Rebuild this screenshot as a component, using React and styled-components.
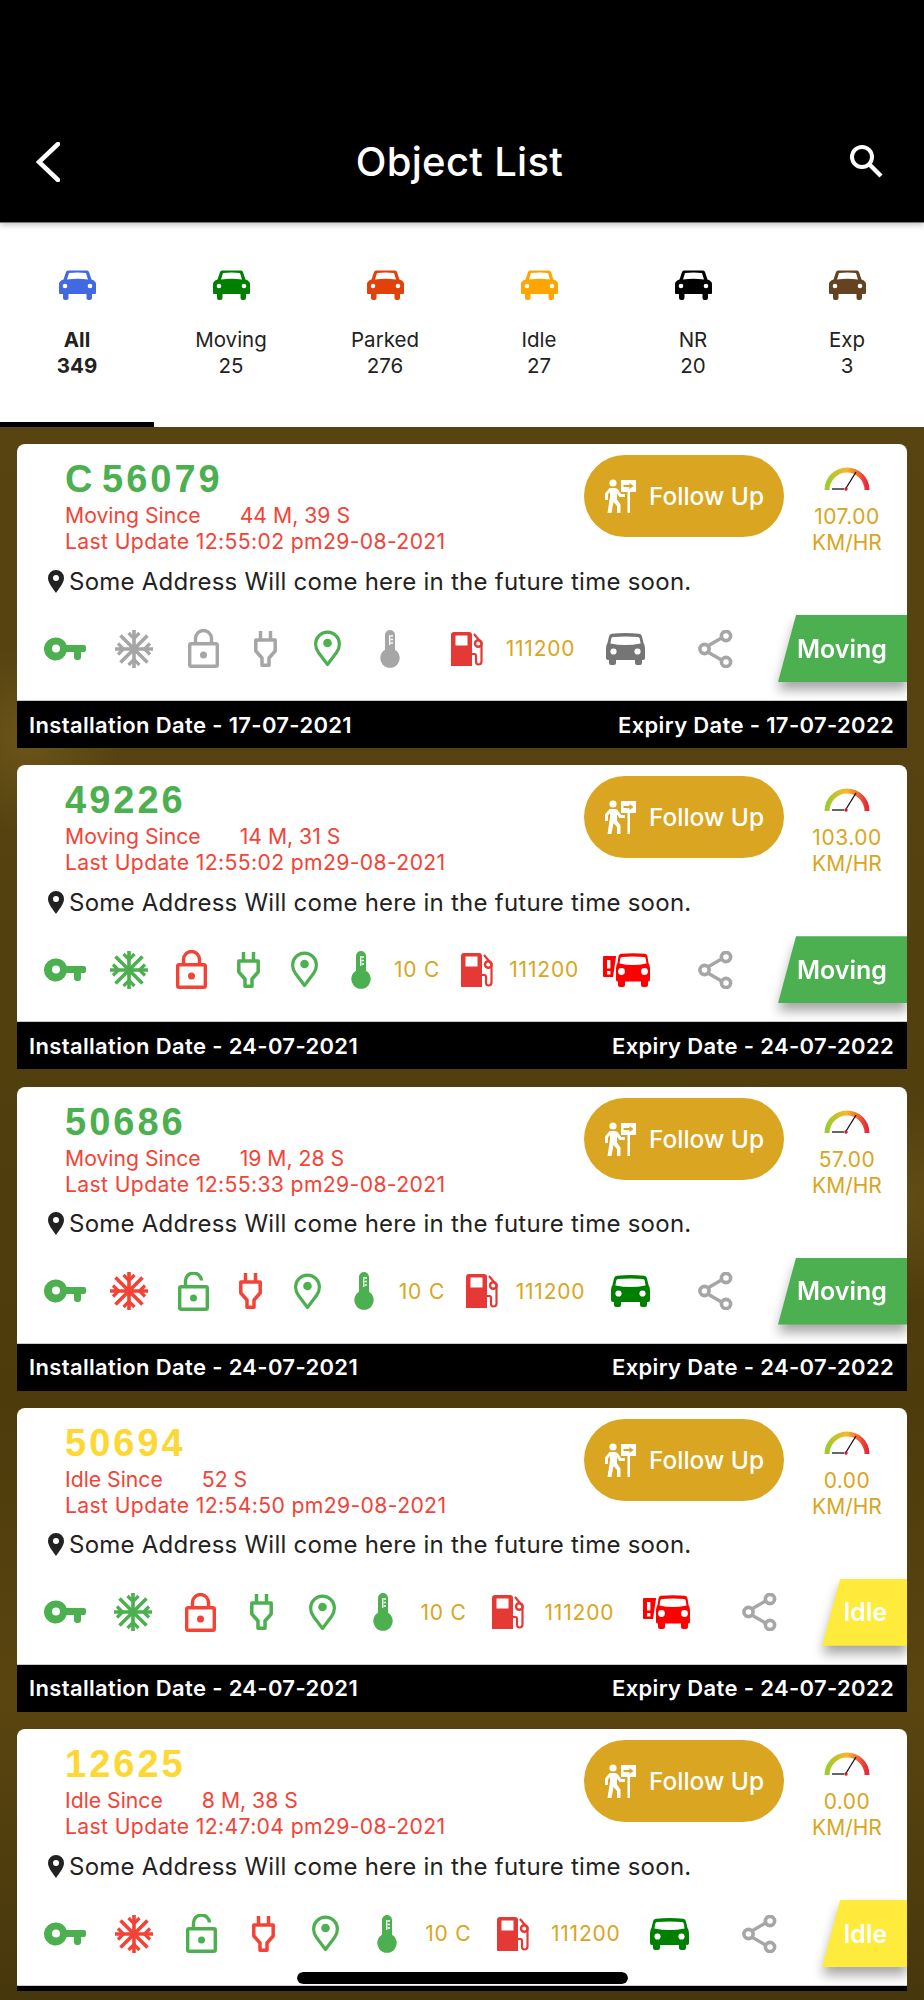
import React from 'react';
import styled, { createGlobalStyle } from 'styled-components';

const GOLD = '#daa520';
const GREEN = '#4caf50';
const RED = '#f44336';
const GREY = '#a6a6a6';

const tabs = [
  { label: 'All', count: 349, color: '#4169e1', active: true },
  { label: 'Moving', count: 25, color: '#008000' },
  { label: 'Parked', count: 276, color: '#e2420a' },
  { label: 'Idle', count: 27, color: '#ffa500' },
  { label: 'NR', count: 20, color: '#000000' },
  { label: 'Exp', count: 3, color: '#654321' },
];

// the last card runs under the bottom edge, its dates are not on screen
const objects = [
  { name: 'C 56079', status: 'Moving', since: '44 M, 39 S', update: '12:55:02 pm29-08-2021', speed: '107.00', snow: GREY, lock: GREY, plug: GREY, thermo: GREY, temp: '', car: '#757575', install: '17-07-2021', expiry: '17-07-2022' },
  { name: '49226', status: 'Moving', since: '14 M, 31 S', update: '12:55:02 pm29-08-2021', speed: '103.00', snow: GREEN, lock: RED, plug: GREEN, thermo: GREEN, temp: '10 C', car: '#ff0000', alert: true, install: '24-07-2021', expiry: '24-07-2022' },
  { name: '50686', status: 'Moving', since: '19 M, 28 S', update: '12:55:33 pm29-08-2021', speed: '57.00', snow: RED, lock: GREEN, open: true, plug: RED, thermo: GREEN, temp: '10 C', car: '#008000', install: '24-07-2021', expiry: '24-07-2022' },
  { name: '50694', status: 'Idle', since: '52 S', update: '12:54:50 pm29-08-2021', speed: '0.00', snow: GREEN, lock: RED, plug: GREEN, thermo: GREEN, temp: '10 C', car: '#ff0000', alert: true, install: '24-07-2021', expiry: '24-07-2022' },
  { name: '12625', status: 'Idle', since: '8 M, 38 S', update: '12:47:04 pm29-08-2021', speed: '0.00', snow: RED, lock: GREEN, open: true, plug: RED, thermo: GREEN, temp: '10 C', car: '#008000' },
];

function BackIcon() {
  return (
    <svg width="24" height="40" viewBox="0 0 24 40">
      <path d="M22 2 L3 20 L22 38" fill="none" stroke="#fff" strokeWidth="4.5" strokeLinecap="round" strokeLinejoin="miter" />
    </svg>
  );
}

function SearchIcon() {
  return (
    <svg width="34" height="34" viewBox="0 0 34 34">
      <circle cx="13" cy="13" r="10" fill="none" stroke="#fff" strokeWidth="4" />
      <path d="M20.5 20.5 L32 32" stroke="#fff" strokeWidth="4.4" />
    </svg>
  );
}

function TabCar({ color }) {
  return (
    <svg width="37" height="30" viewBox="0 0 37 30">
      <path
        fillRule="evenodd"
        fill={color}
        d="M9 .5H28Q29.5 .5 30 2L32.5 9.5Q37 11 37 14V23Q37 24 36 24H33V28Q33 30 31 30H29.5Q27.5 30 27.5 28V24H9.5V28Q9.5 30 7.5 30H6Q4 30 4 28V24H1Q0 24 0 23V14Q0 11 4.5 9.5L7 2Q7.5 .5 9 .5ZM10 3L8 9.5Q18.5 8 29 9.5L27 3Q18.5 2 10 3Z"
      />
      <circle cx="6" cy="16" r="2.3" fill="#fff" />
      <circle cx="31" cy="16" r="2.3" fill="#fff" />
    </svg>
  );
}

function KeyIcon() {
  return (
    <svg width="42" height="24" viewBox="0 0 42 24" style={{ display: 'block' }}>
      <path
        fillRule="evenodd"
        fill={GREEN}
        d="M12 0.5A11.5 11.5 0 0 1 22.6 8H40Q42 8 42 10V13Q42 15 40 15H37V20Q37 23 34 23H33Q30 23 30 20V15H22.6A11.5 11.5 0 1 1 12 .5ZM12 7.5A4 4 0 1 0 12 15.5A4 4 0 1 0 12 7.5Z"
      />
    </svg>
  );
}

function SnowIcon({ color }) {
  return (
    <svg width="38" height="38" viewBox="0 0 38 38" style={{ display: 'block' }}>
      <g stroke={color} strokeWidth="3.6" fill="none">
        <path d="M19 0V38M0 19H38M5.5 5.5L32.5 32.5M32.5 5.5L5.5 32.5" />
        <path d="M13.5 3L19 8.5L24.5 3M13.5 35L19 29.5L24.5 35M3 13.5L8.5 19L3 24.5M35 13.5L29.5 19L35 24.5" strokeWidth="3.2" />
      </g>
    </svg>
  );
}

function LockIcon({ color, open }) {
  return (
    <svg width="31" height="39" viewBox="0 0 31 39" style={{ display: 'block' }}>
      <rect x="1.7" y="14.7" width="27.6" height="22.6" rx="1.5" fill="none" stroke={color} strokeWidth="3.4" />
      <path
        d={open ? 'M7.5 14V9.5A8 8 0 0 1 23.5 8.5' : 'M7.5 14V9.5A8 8 0 0 1 23.5 9.5V14'}
        fill="none"
        stroke={color}
        strokeWidth="3.4"
      />
      <circle cx="15.5" cy="26" r="3.5" fill={color} />
    </svg>
  );
}

function PlugIcon({ color }) {
  return (
    <svg width="23" height="36" viewBox="0 0 23 36" style={{ display: 'block' }}>
      <path
        d="M6.5 0V9M16.5 0V9M1.8 9H21.2V20L15 27V34.2H8V27L1.8 20Z"
        fill="none"
        stroke={color}
        strokeWidth="3.5"
        strokeLinejoin="round"
      />
    </svg>
  );
}

function PinOutline() {
  return (
    <svg width="27" height="37" viewBox="0 0 27 37" style={{ display: 'block' }}>
      <path
        d="M13.5 34.5L4.5 22.5C2.5 19.8 1.6 17.2 1.6 14A11.9 11.9 0 0 1 25.4 14C25.4 17.2 24.5 19.8 22.5 22.5Z"
        fill="none"
        stroke={GREEN}
        strokeWidth="3.2"
        strokeLinejoin="round"
      />
      <circle cx="13.5" cy="13" r="4.3" fill={GREEN} />
    </svg>
  );
}

function ThermoIcon({ color }) {
  return (
    <svg width="20" height="38" viewBox="0 0 20 38" style={{ display: 'block' }}>
      <path
        fill={color}
        d="M5 5A5 5 0 0 1 15 5V19.8A9.7 9.7 0 1 1 5 19.8Z"
      />
      <path d="M10.5 6H13M10.5 9.5H13M10.5 13H13" stroke="#fff" strokeWidth="1.3" />
      <path d="M9.7 5V15" stroke="#fff" strokeWidth="1.3" />
    </svg>
  );
}

function FuelIcon() {
  return (
    <svg width="32" height="34" viewBox="0 0 32 34" style={{ display: 'block' }}>
      <path
        fillRule="evenodd"
        fill="#e53935"
        d="M3 0H18Q21 0 21 3V34H0V3Q0 0 3 0ZM4.5 3.5V13.5H16.5V3.5Z"
      />
      <path
        d="M21 22H23.5Q25 22 25 24V29.5Q25 32.5 27.5 32.5Q30.5 32.5 30.5 29.5V11L23 2"
        fill="none"
        stroke="#e53935"
        strokeWidth="2.2"
      />
      <circle cx="27.3" cy="11.5" r="3.3" fill="none" stroke="#e53935" strokeWidth="2.4" />
    </svg>
  );
}

function RowCar({ color }) {
  return (
    <svg width="39" height="32" viewBox="0 0 39 32" style={{ display: 'block' }}>
      <path
        fillRule="evenodd"
        fill={color}
        d="M6 .8Q19.5 -.6 33 .8Q35.5 1 36 3.5L37.5 10Q39 12 39 15V25Q39 27 37 27H36V30Q36 32 34 32H31Q29 32 29 30V27H10V30Q10 32 8 32H5Q3 32 3 30V27H2Q0 27 0 25V15Q0 12 1.5 10L3 3.5Q3.5 1 6 .8ZM7 4Q5.6 4 5.3 5.5L4.4 10.5Q19.5 13.5 34.6 10.5L33.7 5.5Q33.4 4 32 4Q19.5 2.8 7 4Z"
      />
      <circle cx="7.5" cy="18.5" r="3.1" fill="#fff" />
      <circle cx="31.5" cy="18.5" r="3.1" fill="#fff" />
    </svg>
  );
}

function AlertCar({ color }) {
  return (
    <svg width="47" height="34" viewBox="0 0 47 34" style={{ display: 'block' }}>
      <path fill={color} d="M1 3H12.5Q13.5 3 13 4L10 24H1Q0 24 0 23V4Q0 3 1 3Z" />
      <path d="M5.7 7V15.5" stroke="#fff" strokeWidth="3.4" />
      <path d="M5.7 18V21.5" stroke="#fff" strokeWidth="3.4" />
      <path
        fillRule="evenodd"
        fill={color}
        d="M18 .8Q30 -.4 42 .8Q44 1 44.5 3.5L45.5 10Q47 12 47 15V27Q47 28.5 45 28.5V32Q45 34 43 34H40Q38 34 38 32V28.5H22V32Q22 34 20 34H17Q15 34 15 32V28.5Q13 28.5 13 27V15Q13 12 14.5 10L15.5 3.5Q16 1 18 .8ZM19 4Q17.5 4 17.3 5.5L16.5 10.5Q30 13.5 43.5 10.5L42.7 5.5Q42.5 4 41 4Q30 2.8 19 4Z"
      />
      <circle cx="18.5" cy="18.5" r="3.4" fill="#fff" />
      <circle cx="41.5" cy="18.5" r="3.4" fill="#fff" />
    </svg>
  );
}

function ShareIcon() {
  return (
    <svg width="35" height="38" viewBox="0 0 35 38" style={{ display: 'block' }}>
      <path d="M8 17L27 6M8 21L27 32" stroke={GREY} strokeWidth="3.4" />
      <g fill="#fff" stroke={GREY} strokeWidth="3.6">
        <circle cx="6.5" cy="19" r="4.6" />
        <circle cx="28" cy="6" r="4.6" />
        <circle cx="28" cy="32" r="4.6" />
      </g>
    </svg>
  );
}

function FollowIcon() {
  return (
    <svg width="32" height="34" viewBox="0 0 32 34">
      <circle cx="9" cy="4" r="3.6" fill="#fff" />
      <path
        fill="#fff"
        d="M5.5 9H11Q13 9 14 10.5L17 15H21V18H15.5L13 14.6V20.5L16.5 25.5V34H13V27L9.5 23L7.5 34H3.5L6 17.5V13L4 15.5V21H1V14.5Z"
      />
      <path fill="#fff" fillRule="evenodd" d="M17 1H32V13H26V34H23.5V13H17ZM19.5 6V8H25.5V10L29.5 7L25.5 4V6Z" />
    </svg>
  );
}

function Gauge() {
  return (
    <svg width="46" height="24" viewBox="0 0 46 24">
      <defs>
        <linearGradient id="gaugeArc" x1="0" y1="0" x2="1" y2="0">
          <stop offset="0" stopColor="#9ccc2d" />
          <stop offset="0.5" stopColor="#fbb62a" />
          <stop offset="1" stopColor="#e9263a" />
        </linearGradient>
      </defs>
      <path d="M3 23A20 20 0 0 1 43 23" fill="none" stroke="url(#gaugeArc)" strokeWidth="5" />
      <path d="M8 22H20" stroke="#333" strokeWidth="1.5" />
      <path d="M21.5 22L32 5" stroke="#111" strokeWidth="1.3" />
      <circle cx="22" cy="22" r="1.7" fill="#d4172a" />
    </svg>
  );
}

function AddressPin() {
  return (
    <svg width="16" height="23" viewBox="0 0 16 23">
      <path
        fillRule="evenodd"
        fill="#222"
        d="M8 0A8 8 0 0 1 16 8C16 13 11 18.5 8 23C5 18.5 0 13 0 8A8 8 0 0 1 8 0ZM8 5A3 3 0 1 0 8 11A3 3 0 1 0 8 5Z"
      />
    </svg>
  );
}

function ObjectCard({ item }) {
  const moving = item.status === 'Moving';
  return (
    <Card>
      <TopRow>
        <Info>
          <ObjectName $color={moving ? GREEN : '#fdd835'}>{item.name}</ObjectName>
          <RedLine>
            {item.status} Since<Since>{item.since}</Since>
          </RedLine>
          <RedLine $spaced>Last Update {item.update}</RedLine>
        </Info>
        <FollowButton>
          <FollowIcon />
          Follow Up
        </FollowButton>
        <SpeedBox>
          <Gauge />
          <SpeedText $spaced>{item.speed}</SpeedText>
          <SpeedText>KM/HR</SpeedText>
        </SpeedBox>
      </TopRow>
      <AddressRow>
        <AddressPin />
        Some Address Will come here in the future time soon.
      </AddressRow>
      <StatusRow>
        <IconRow>
          <Slot $w={49}><KeyIcon /></Slot>
          <Slot $w={50}><SnowIcon color={item.snow} /></Slot>
          <Slot $w={44}><LockIcon color={item.lock} open={item.open} /></Slot>
          <Slot $w={38}><PlugIcon color={item.plug} /></Slot>
          <Slot $w={43}><PinOutline /></Slot>
          <Slot $w={27}><ThermoIcon color={item.thermo} /></Slot>
          <ValueText $gap={item.temp ? 4 : 0}>{item.temp}</ValueText>
          <Slot $w={32}><FuelIcon /></Slot>
          <ValueText $gap={8}>111200</ValueText>
          <Slot $w={item.alert ? 78 : 70}>
            {item.alert ? <AlertCar color={item.car} /> : <RowCar color={item.car} />}
          </Slot>
          <Slot $w={35}><ShareIcon /></Slot>
        </IconRow>
        <BadgeShadow>
          <Badge $idle={!moving}>{item.status}</Badge>
        </BadgeShadow>
      </StatusRow>
      <DateBar>
        {item.install && <span>Installation Date - {item.install}</span>}
        {item.expiry && <span>Expiry Date - {item.expiry}</span>}
      </DateBar>
    </Card>
  );
}

function App() {
  return (
    <Screen>
      <GlobalStyle />
      <Header>
        <BackIcon />
        <HeaderTitle>Object List</HeaderTitle>
        <SearchButton><SearchIcon /></SearchButton>
      </Header>
      <TabBar>
        {tabs.map((tab) => (
          <Tab key={tab.label} $active={tab.active}>
            <TabCar color={tab.color} />
            <TabLabel>{tab.label}</TabLabel>
            <TabLabel>{tab.count}</TabLabel>
          </Tab>
        ))}
      </TabBar>
      <List>
        {objects.map((item) => (
          <ObjectCard key={item.name} item={item} />
        ))}
      </List>
      <HomeIndicator />
    </Screen>
  );
}

const GlobalStyle = createGlobalStyle`
  html, body {
    margin: 0;
    padding: 0;
    background: #5a4510;
  }
  * {
    box-sizing: border-box;
  }
`;

const Screen = styled.div`
  position: relative;
  width: 924px;
  height: 2000px;
  display: flex;
  flex-direction: column;
  overflow: hidden;
  font-family: Inter, "Liberation Sans", sans-serif;
  background:
    radial-gradient(circle at 3% 37%, rgba(140, 112, 40, 0.4), transparent 6%),
    radial-gradient(circle at 98% 60%, rgba(140, 112, 40, 0.3), transparent 7%),
    linear-gradient(#5b4610, #554210 40%, #4d3b0c 70%, #5a4510 85%, #47370c);
`;

const Header = styled.header`
  position: relative;
  z-index: 2;
  height: 223px;
  flex: none;
  padding: 142px 41px 0 36px;
  display: grid;
  grid-template-columns: 1fr auto 1fr;
  align-items: start;
  background: #000;
  border-bottom: 1px solid #777;
  box-shadow: 0 2px 6px rgba(0, 0, 0, 0.25);
`;

const HeaderTitle = styled.h1`
  margin: -3px 0 0;
  font-size: 40px;
  line-height: 46px;
  font-weight: 500;
  color: #fff;
  letter-spacing: 0.3px;
`;

const SearchButton = styled.div`
  justify-self: end;
  padding-top: 2px;
`;

const TabBar = styled.nav`
  height: 204px;
  flex: none;
  display: grid;
  grid-template-columns: repeat(6, 154px);
  background: #fff;
`;

const Tab = styled.div`
  display: flex;
  flex-direction: column;
  align-items: center;
  padding-top: 47px;
  color: #222;
  font-weight: ${(p) => (p.$active ? 700 : 400)};
  border-bottom: 5px solid ${(p) => (p.$active ? '#000' : 'transparent')};

  svg {
    margin-bottom: 27px;
  }
`;

const TabLabel = styled.div`
  font-size: 20.5px;
  line-height: 26px;
`;

const List = styled.main`
  flex: 1;
  min-height: 0;
  margin-bottom: 9px;
  padding: 17px 17px 0;
  display: flex;
  flex-direction: column;
  gap: 17.25px;
  overflow: hidden;
`;

const Card = styled.article`
  flex: none;
  height: 304px;
  display: flex;
  flex-direction: column;
  background: #fff;
  border-radius: 8px 8px 0 0;
  overflow: hidden;
`;

const TopRow = styled.div`
  height: 120px;
  flex: none;
  display: flex;
  align-items: flex-start;
  padding-right: 20px;
`;

const Info = styled.div`
  flex: 1;
  padding: 15px 0 0 48px;
`;

const ObjectName = styled.div`
  font-family: "Liberation Sans", Arial, sans-serif;
  font-weight: 700;
  font-size: 38px;
  line-height: 40px;
  letter-spacing: 3px;
  word-spacing: -7px;
  margin-bottom: 3px;
  color: ${(p) => p.$color};
`;

const RedLine = styled.div`
  font-size: 21.2px;
  line-height: 26px;
  letter-spacing: ${(p) => (p.$spaced ? '0.35px' : '0')};
  color: ${RED};
  white-space: nowrap;
`;

const Since = styled.span`
  margin-left: 39px;
`;

const FollowButton = styled.div`
  width: 200px;
  height: 82px;
  margin-top: 11px;
  border-radius: 41px;
  display: flex;
  align-items: center;
  justify-content: center;
  gap: 13px;
  background: ${GOLD};
  color: #fff;
  font-size: 24.5px;
  font-weight: 500;
`;

const SpeedBox = styled.div`
  width: 80px;
  margin-left: 23px;
  padding-top: 23px;
  display: flex;
  flex-direction: column;
  align-items: center;

  svg {
    margin-bottom: 13px;
  }
`;

const SpeedText = styled.div`
  font-size: 21px;
  line-height: 26px;
  letter-spacing: ${(p) => (p.$spaced ? '0.5px' : '0')};
  color: ${GOLD};
`;

const AddressRow = styled.div`
  height: 34px;
  flex: none;
  padding-left: 31px;
  display: flex;
  align-items: center;
  gap: 5px;
  font-size: 24px;
  letter-spacing: 0.25px;
  color: #222;
  white-space: nowrap;
`;

const StatusRow = styled.div`
  height: 67px;
  margin-top: 17px;
  flex: none;
  display: flex;
  align-items: center;
`;

const IconRow = styled.div`
  flex: 1;
  min-width: 0;
  padding: 0 45px 0 27px;
  display: flex;
  align-items: center;
  justify-content: space-between;
`;

const Slot = styled.div`
  flex: none;
  width: ${(p) => p.$w}px;
`;

const ValueText = styled.div`
  flex: none;
  margin-right: ${(p) => p.$gap}px;
  font-size: 21px;
  letter-spacing: 0.8px;
  color: ${GOLD};
`;

const BadgeShadow = styled.div`
  flex: none;
  filter: drop-shadow(0 8px 6px rgba(0, 0, 0, 0.35));
`;

const Badge = styled.div`
  height: 67px;
  padding: 0 20px 0 ${(p) => (p.$idle ? 21 : 19)}px;
  display: flex;
  align-items: center;
  clip-path: polygon(18px 0, 100% 0, 100% 100%, 0 100%);
  background: ${(p) => (p.$idle ? '#ffeb3b' : GREEN)};
  color: #fff;
  font-size: 25px;
  font-weight: 600;
`;

const DateBar = styled.div`
  flex: 1;
  display: flex;
  align-items: center;
  justify-content: space-between;
  padding: 0 13px 0 12px;
  margin-top: 18px;
  background: #000;
  border-top: 1px solid #ccc;
  color: #fff;
  font-size: 22px;
  letter-spacing: 0.35px;
  font-weight: 600;
`;

const HomeIndicator = styled.div`
  position: absolute;
  left: 297px;
  bottom: 16px;
  width: 331px;
  height: 12px;
  border-radius: 6px;
  background: #000;
  outline: 1px solid rgba(255, 255, 255, 0.7);
`;

export default App;
